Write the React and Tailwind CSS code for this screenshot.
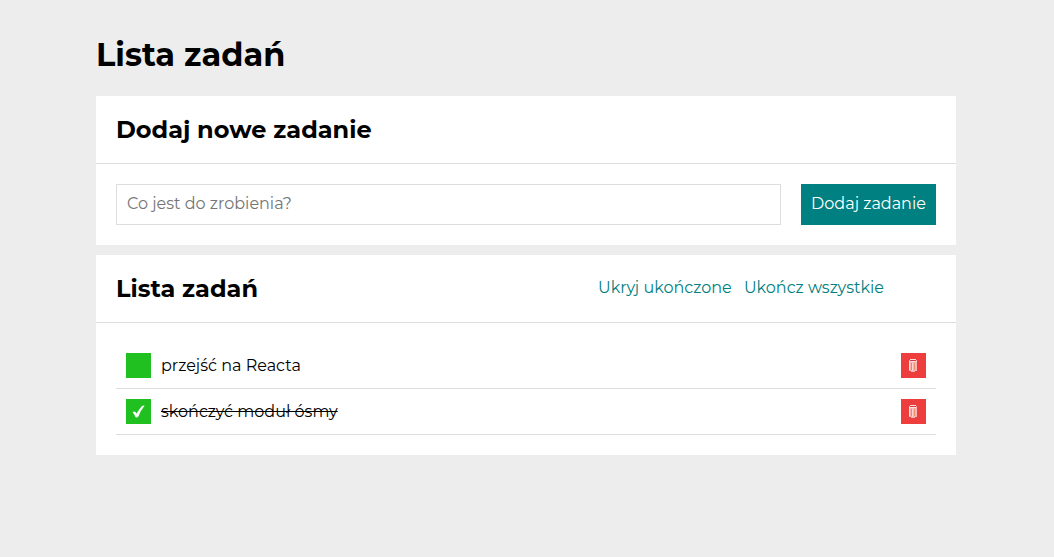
import { useState } from "react";

function CheckIcon() {
  return (
    <svg viewBox="0 0 13 13" className="h-[13px] w-[13px]" aria-hidden="true">
      <path d="M0.6 7.2 Q2 5.9 3.4 6.9 L4.6 8.6 Q7 4 10 0.9 Q11.6 0.1 12.6 0.7 Q8.8 5 6.4 11.4 Q4.8 13.2 3.5 11.9 Q2.4 9 0.6 7.2Z" fill="#fff" />
    </svg>
  );
}

function BinIcon() {
  return (
    <svg viewBox="0 0 8 13" className="h-[13px] w-2" aria-hidden="true">
      <path d="M0 1H1V0H7V1H8V12H6V13H2V12H0Z" fill="#f9b4b4" />
      <path d="M1 0H7V1H1Z" fill="#fcdcdc" />
      <path d="M1 1H7V2H1Z" fill="#de3a3f" />
      <path d="M1 2H7V3H1ZM0 2H1V11H0Z" fill="#fde0e0" />
      <path d="M2 4H3V11H2Z" fill="#f08080" />
      <path d="M5 4H6V11H5Z" fill="#f09060" />
      <path d="M3 4H4V12H3Z" fill="#fcd2d6" />
    </svg>
  );
}

function Section({ title, actions, children }) {
  return (
    <section className="mb-2.5 bg-white">
      <header className="flex items-center justify-between border-b border-[#ddd] px-5 py-[18px]">
        <h2 className="text-2xl leading-[31px] font-bold">{title}</h2>
        {actions}
      </header>
      <div className="p-5">{children}</div>
    </section>
  );
}

export default function App() {
  const [text, setText] = useState("");
  const [hidden, setHidden] = useState(false);
  const [tasks, setTasks] = useState([
    { id: 1, content: "przejść na Reacta", done: false },
    { id: 2, content: "skończyć moduł ósmy", done: true },
  ]);

  const addTask = (event) => {
    event.preventDefault();
    if (!text.trim()) return;
    setTasks([...tasks, { id: Date.now(), content: text.trim(), done: false }]);
    setText("");
  };
  const toggle = (id) => setTasks(tasks.map((t) => (t.id === id ? { ...t, done: !t.done } : t)));

  return (
    <div className="min-h-screen bg-[#ededed] pr-0.5 font-['Montserrat','Inter',sans-serif] text-base text-black">
      <main className="mx-auto max-w-[900px] px-5 pt-[35px]">
        <h1 className="mb-[21px] text-[32px] leading-10 font-bold">Lista zadań</h1>

        <Section title="Dodaj nowe zadanie">
          <form className="flex flex-wrap gap-5" onSubmit={addTask}>
            <input
              aria-label="Nowe zadanie"
              className="h-[41px] min-w-0 flex-1 border border-[#ddd] px-2.5 pb-0.5 placeholder:text-[#757575]"
              placeholder="Co jest do zrobienia?"
              value={text}
              onChange={(e) => setText(e.target.value)}
            />
            <button className="h-[41px] min-w-[135px] bg-[#008080] px-2.5 pb-0.5 text-white">Dodaj zadanie</button>
          </form>
        </Section>

        <Section
          title="Lista zadań"
          actions={
            <div className="mr-[52px] flex gap-3 pb-0.5 text-[#008080]">
              <button className="min-w-[134px]" onClick={() => setHidden(!hidden)}>
                {hidden ? "Pokaż ukończone" : "Ukryj ukończone"}
              </button>
              <button className="min-w-[140px]" onClick={() => setTasks(tasks.map((t) => ({ ...t, done: true })))}>
                Ukończ wszystkie
              </button>
            </div>
          }
        >
          <ul>
            {tasks.filter((t) => !(hidden && t.done)).map((t) => (
              <li key={t.id} className="flex items-center gap-2.5 border-b border-[#ddd] p-2.5">
                <button
                  aria-label="Zmień stan zadania"
                  className="flex size-[25px] items-center justify-center bg-[#20c020]"
                  onClick={() => toggle(t.id)}
                >
                  {t.done && <CheckIcon />}
                </button>
                <span className={t.done ? "flex-1 line-through" : "flex-1"}>{t.content}</span>
                <button
                  aria-label="Usuń zadanie"
                  className="flex size-[25px] items-center justify-center bg-[#ee3d3d] pr-px"
                  onClick={() => setTasks(tasks.filter((x) => x.id !== t.id))}
                >
                  <BinIcon />
                </button>
              </li>
            ))}
          </ul>
        </Section>
      </main>
    </div>
  );
}
